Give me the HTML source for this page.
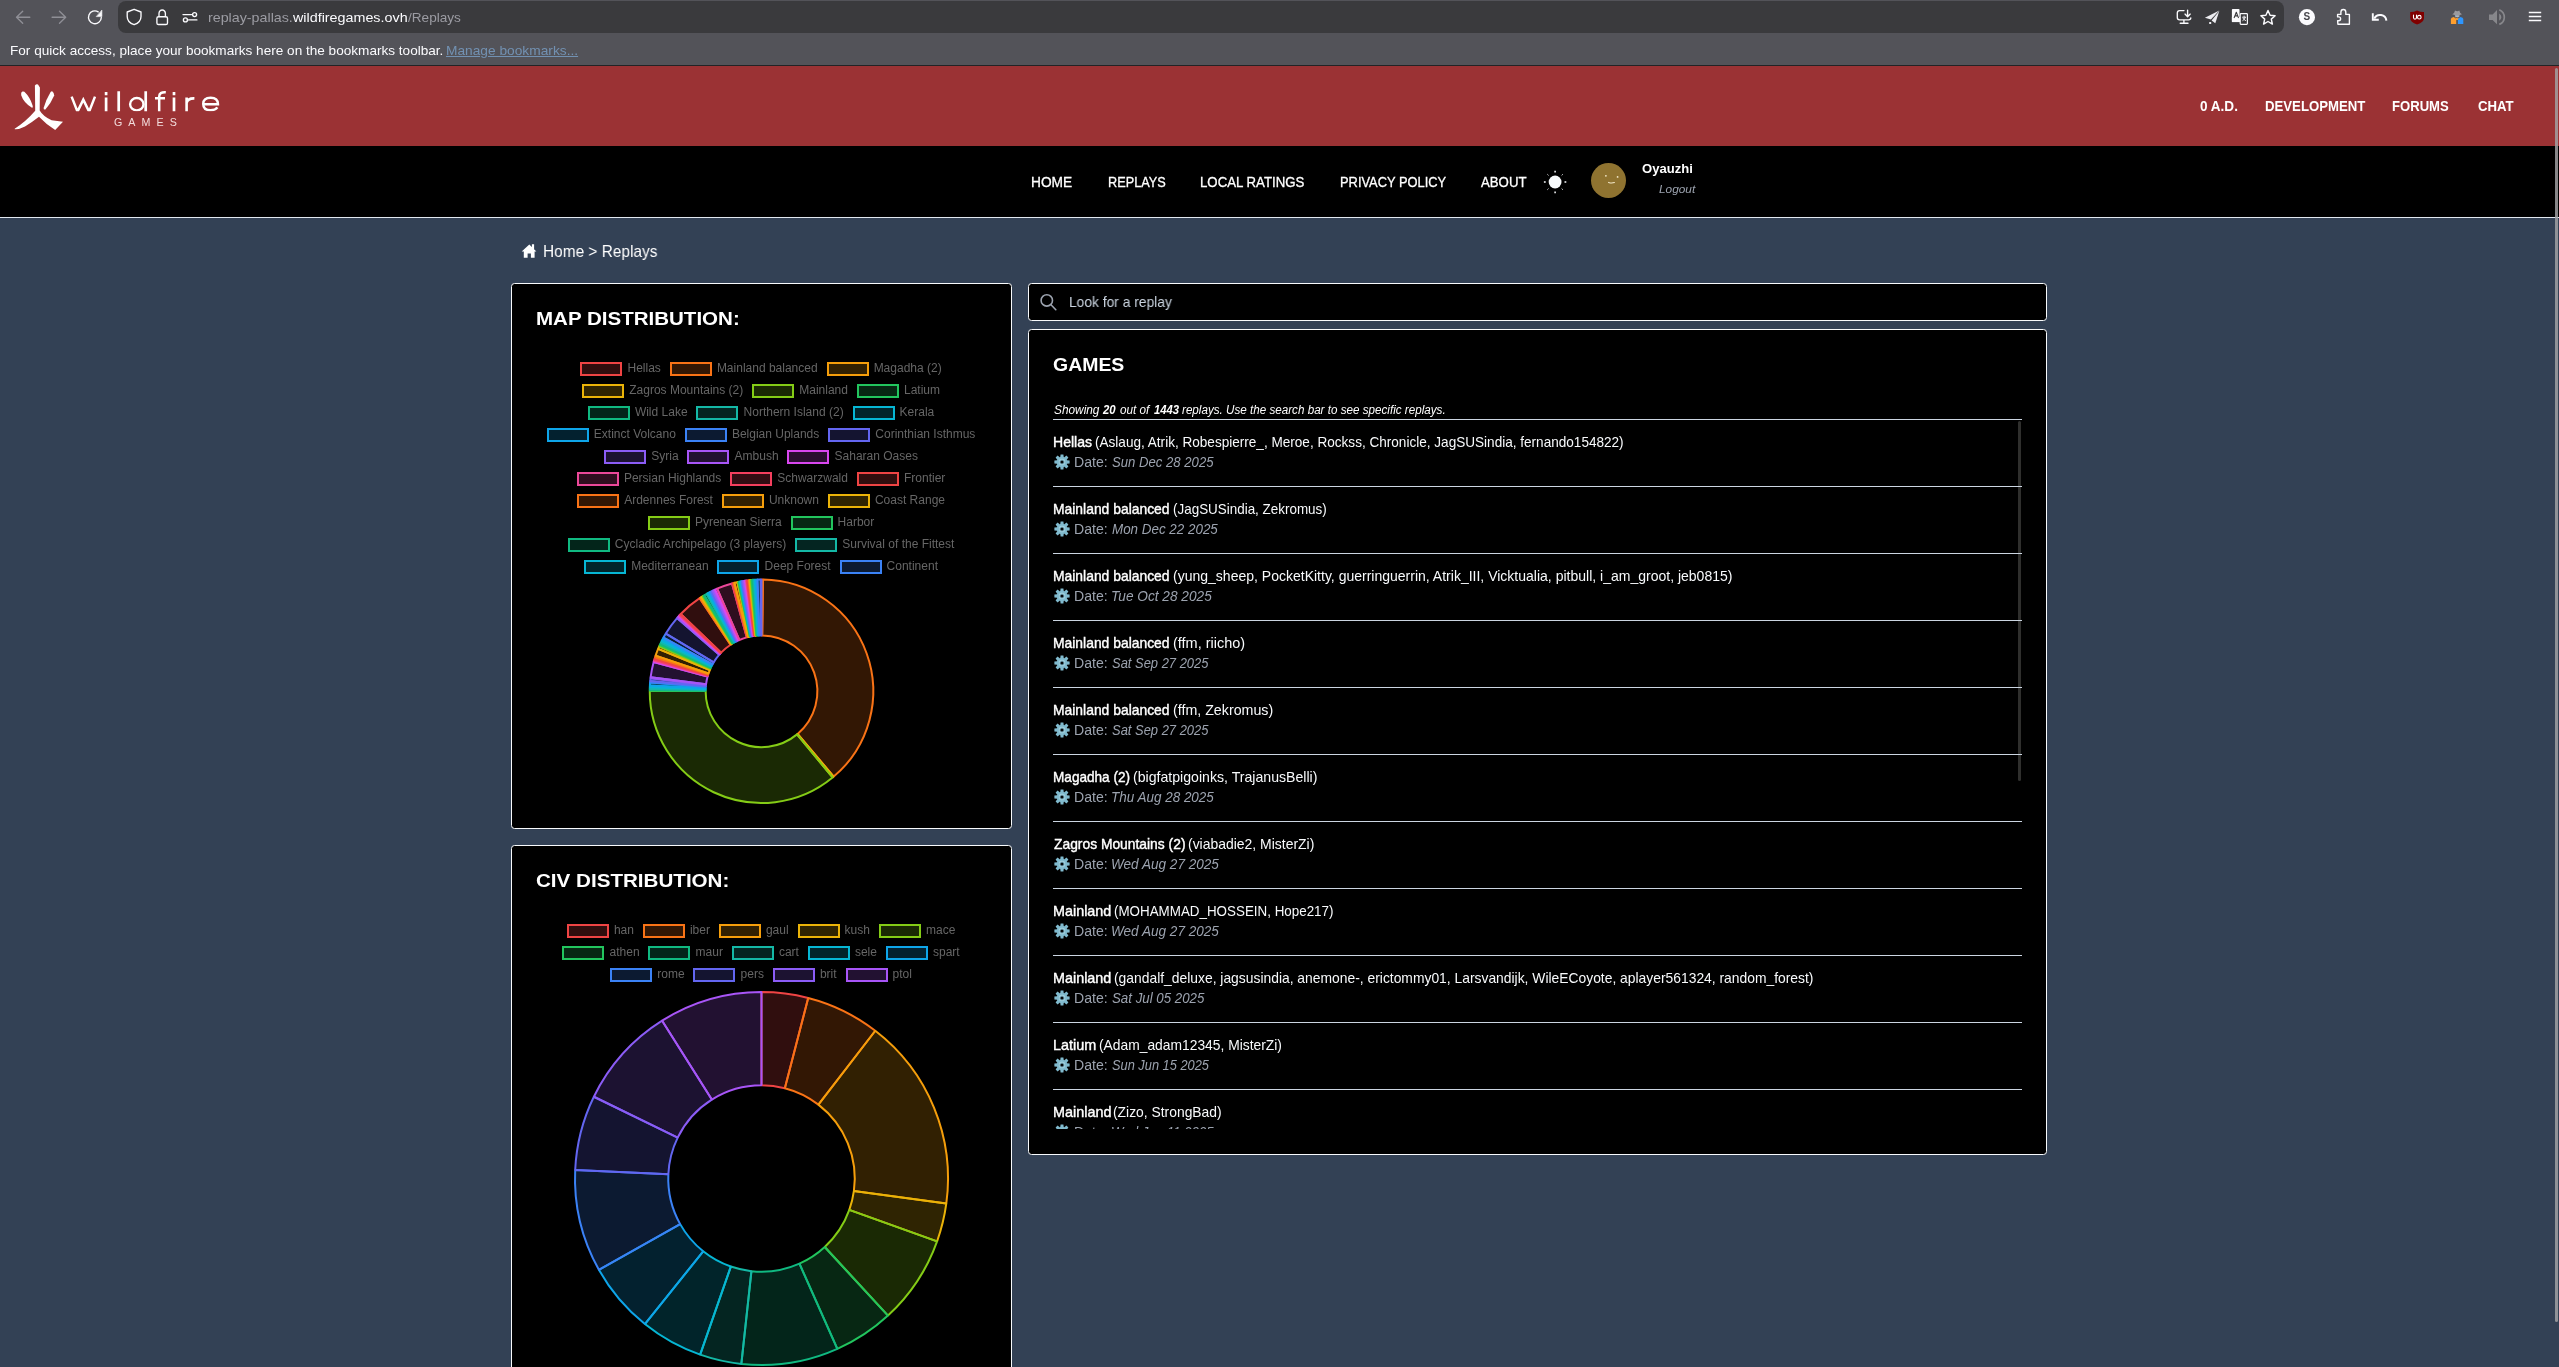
<!DOCTYPE html>
<html><head><meta charset="utf-8"><title>Replays</title>
<style>
html,body{margin:0;padding:0;background:#334155;overflow:hidden}
body{width:2559px;height:1367px;position:relative;font-family:"Liberation Sans",sans-serif}
.abs,.t,.lb,.lt,.sep,.gear,.box{position:absolute}
.t{white-space:pre;line-height:1;transform-origin:0 0;font-family:"Liberation Sans",sans-serif}
.box{background:#000;border:1px solid #f8fafc;border-radius:3.5px;box-sizing:border-box}
.lb{width:42px;height:14px;box-sizing:border-box;border:2px solid}
.lt{white-space:pre;line-height:1;font-size:12px;color:#666;font-family:"Liberation Sans",sans-serif}
.sep{left:0;width:969px;height:1px;background:#cbd5e1}
.gear{left:0.7px;width:16px;height:16px}
svg{overflow:visible}
.donut path{stroke-width:2;stroke-linejoin:bevel}
#root{position:absolute;left:0;top:0;width:2559px;height:1367px;will-change:transform}
</style></head><body><div id="root">
<svg width="0" height="0" style="position:absolute"><defs>
<g id="gear"><path fill="#80bace" d="M-1.75 -4.68L-1.40 -7.62L1.40 -7.62L1.75 -4.68L2.07 -4.55L4.40 -6.38L6.38 -4.40L4.55 -2.07L4.68 -1.75L7.62 -1.40L7.62 1.40L4.68 1.75L4.55 2.07L6.38 4.40L4.40 6.38L2.07 4.55L1.75 4.68L1.40 7.62L-1.40 7.62L-1.75 4.68L-2.07 4.55L-4.40 6.38L-6.38 4.40L-4.55 2.07L-4.68 1.75L-7.62 1.40L-7.62 -1.40L-4.68 -1.75L-4.55 -2.07L-6.38 -4.40L-4.40 -6.38L-2.07 -4.55Z"/><circle r="5.1" fill="#80bace"/><circle r="3.2" fill="#a9d6e2"/><circle r="2.6" fill="#7fb4c6"/><circle r="1.6" fill="#05080a"/></g>
</defs></svg>

<!-- browser chrome -->
<div class="abs" style="left:0;top:0;width:2559px;height:65px;background:#535359"></div>
<div class="abs" style="left:0;top:65px;width:2559px;height:1px;background:#232326"></div>
<div class="abs" style="left:118px;top:1px;width:2166px;height:32px;border-radius:8px;background:#3a3a3d"></div>

<svg class="abs" style="left:0;top:0" width="2559" height="66" viewBox="0 0 2559 66" fill="none" stroke-linecap="round" stroke-linejoin="round">
 <g stroke="#8f8f96" stroke-width="1.35">
  <path d="M29.8 17.2H16.6M22.7 11.2L16.5 17.2L22.7 23.2"/>
  <path d="M52.1 17.2H65.5M59.5 11.2L65.7 17.2L59.5 23.2"/>
 </g>
 <g stroke="#fbfbfe" stroke-width="1.35">
  <path d="M101.3 17.4A6.4 6.4 0 1 1 98.2 11.8"/>
  <path d="M101.9 10.4V16.6H96.6Z" fill="#fbfbfe" stroke-width="0.6"/>
  <path d="M134.1 9.3L141 12V16.4C141 20.4 138.4 23.2 134.1 24.7C129.8 23.2 127.2 20.4 127.2 16.4V12Z"/>
  <rect x="156.9" y="16.7" width="10.6" height="7.8" rx="1.6"/>
  <path d="M159 16.6V13.6A3.2 3.6 0 0 1 165.4 13.6V16.6"/>
  <path d="M183 14.6H191.6M188.6 19.9H196.9"/>
  <circle cx="194.6" cy="14.6" r="2"/><circle cx="185.4" cy="19.9" r="2"/>
  <!-- screen + download -->
  <path d="M2184 10.6H2179.6Q2177.3 10.6 2177.3 12.9V17.6Q2177.3 19.9 2179.6 19.9H2188.6Q2190.8 19.9 2190.8 17.8M2183.9 20.2V23M2180.2 23.2H2188"/>
  <path d="M2187.6 10.1V16.4M2185 14.1L2187.6 16.7L2190.2 14.1"/>
  <!-- star -->
  <path d="M2268.0 10.5L2270.1 15.2L2275.1 15.7L2271.3 19.1L2272.4 24.1L2268.0 21.5L2263.6 24.1L2264.7 19.1L2260.9 15.7L2265.9 15.2Z" stroke-width="1.45"/>
  <!-- puzzle -->
  <path d="M2337.9 24.3H2349.4V14.4H2345.8V12.2Q2345.8 9.5 2343.4 9.5Q2340.9 9.5 2340.9 12.2V14.4H2337.6V16.9H2338.7Q2340.6 16.9 2340.6 18.8Q2340.6 20.7 2338.7 20.7H2337.6Z" stroke-width="1.4"/>
  <!-- undo -->
  <path d="M2372.8 13.3V19.7H2378.8" stroke-width="1.9" stroke-linecap="butt" stroke-linejoin="miter"/>
  <path d="M2374.3 18.6A6.4 6.4 0 0 1 2386.4 20.6" stroke-width="2" stroke-linecap="butt"/>
  <!-- hamburger -->
  <path d="M2528.8 12.6H2541.2M2528.8 16.6H2541.2M2528.8 20.5H2541.2" stroke-width="1.5" stroke-linecap="butt"/>
 </g>
 <!-- paper plane -->
 <g fill="#ececf0" stroke="none">
  <path d="M2204.9 17.7L2219.3 10.6L2210.9 19.6Z"/>
  <path d="M2219.3 10.9L2215.3 23.3L2211.6 20.4Z"/>
  <rect x="2209.2" y="22" width="2" height="2"/>
 </g>
 <!-- translate -->
 <rect x="2231.9" y="8.9" width="7.6" height="13.2" rx="0.8" fill="#fbfbfe"/>
 <path d="M2231.9 17H2241.5V22.1H2231.9Z" fill="#fbfbfe"/>
 <path d="M2234.2 17.6L2236.3 12.2L2238.4 17.6M2235 15.9H2237.6" stroke="#3a3a3d" stroke-width="1.1"/>
 <rect x="2240.2" y="13.7" width="7.2" height="10.6" rx="0.8" fill="#3a3a3d" stroke="#fbfbfe" stroke-width="1.2"/>
 <path d="M2242.6 17.2H2245.6M2244.1 16V17.2M2242.8 20.6Q2244.9 19.6 2245.3 17.4M2243 18.2Q2244 20 2245.6 20.6" stroke="#fbfbfe" stroke-width="0.9"/>
 <!-- S -->
 <circle cx="2306.95" cy="17.15" r="8.05" fill="#fbfbfe"/>
 <!-- ublock -->
 <path d="M2417.1 10.4Q2420.6 12.2 2424 12V18Q2424 22 2417.1 24.6Q2410.2 22 2410.2 18V12Q2413.6 12.2 2417.1 10.4Z" fill="#800000"/>
 <path d="M2413.5 15V17.6Q2413.5 19.2 2415 19.2Q2416.5 19.2 2416.5 17.6V15" stroke="#fff" stroke-width="1.1"/>
 <circle cx="2419.3" cy="17.2" r="1.8" stroke="#fff" stroke-width="1.1"/>
 <!-- people -->
 <path d="M2452.3 14.3Q2454.5 13.6 2455 10.6Q2457.2 11.8 2459.3 10.6Q2459.8 13.6 2462 14.3Q2457.2 16.6 2452.3 14.3Z" fill="#9a9a9e"/>
 <path d="M2454.9 15.2H2459.5V16.6Q2457.2 18.2 2454.9 16.6Z" fill="#a9b8c8"/>
 <path d="M2455 17Q2457.2 19.5 2459.4 17L2458 20H2456.4Z" fill="#ff9f2e"/>
 <path d="M2450.9 23.9V19Q2451 17.2 2453.8 16.9L2456.2 19V23.9Z" fill="#ff9f2e"/>
 <path d="M2463.3 23.9V19Q2463.2 17.2 2460.4 16.9L2457.9 19V23.9Z" fill="#2e96ff"/>
 <!-- speaker -->
 <g fill="#87878b"><path d="M2489 14.6H2492.6L2497 10.1V24.2L2492.6 20.1H2489Z"/>
 <path d="M2499.2 13.6Q2503.6 17.3 2499.2 20.7Z"/></g>
 <path d="M2499.3 9.7Q2504.3 12 2504.3 17.2Q2504.3 22.4 2499.3 24.4" stroke="#87878b" stroke-width="1.7" stroke-linecap="butt"/>
</svg>
<span class="t" style="left:2303.6px;top:12.2px;font-size:10px;font-weight:700;color:#45454b">S</span>


<!-- site header -->
<div class="abs" style="left:0;top:66px;width:2559px;height:80px;background:#9b3234"></div>

<svg class="abs" style="left:0;top:66px" width="240" height="80" viewBox="0 66 240 80">
 <g fill="#fff">
  <path d="M34.9 85.6Q36.5 83.6 38 84.6L39.9 87.6L39.7 110.6Q43.2 116.6 51.6 120.3L63 121.8L55.2 130Q45.6 124 39 116.8Q33 121.6 25 126.5Q19 129.6 14.8 129.3Q14.4 128.8 15 128.5Q26 121.5 35.2 110.8Z"/>
  <path d="M22.4 91.6Q20.6 92.3 21.2 95.2Q23.6 102.6 32 107.8Q33.4 107.6 32.6 105.4Q30 97.2 24.4 91.8Q23.4 91.2 22.4 91.6Z"/>
  <path d="M52.2 91.2Q54.6 93.2 54.2 95.6Q51 103.4 45.4 109.4Q43.6 110.2 43.6 108Q46 99.6 50.6 92Q51.4 91 52.2 91.2Z"/>
 </g>
 <clipPath id="lc"><rect x="60" y="88" width="170" height="23.35"/></clipPath>
 <g fill="none" stroke="#fff" stroke-width="2.7" stroke-linejoin="miter" clip-path="url(#lc)">
  <path d="M71.6 96.6L77.5 111.6L83.3 99.6L89.1 111.6L95 96.6" stroke-width="2.5"/>
  <path d="M106.1 97.4V112M106.1 92.1V95.3"/>
  <path d="M118.7 91.2V112"/>
  <ellipse cx="136.8" cy="104.2" rx="6.7" ry="6.2" stroke-width="2.4"/>
  <path d="M145.7 91.2V112"/>
  <path d="M159.2 112V96.4Q159.2 91.9 165.8 92.3M155 98.3H165" stroke-width="2.5"/>
  <path d="M174 97.4V112M174 92.1V95.3"/>
  <path d="M186.6 97.4V112M186.6 103Q187.4 98.2 194.4 98.4" stroke-width="2.6"/>
  <path d="M203.4 104.3H218Q218 97.7 210.6 97.7Q203.2 97.7 203.2 104Q203.2 110.3 210.6 110.3Q215.4 110.3 217.4 107.4" stroke-width="2.4"/>
 </g>
</svg>
<div class="abs" style="left:0;top:146px;width:2559px;height:71px;background:#000"></div>
<div class="abs" style="left:0;top:217px;width:2559px;height:1px;background:#e2e8f0"></div>

<!-- nav icons -->
<svg class="abs" style="left:1540px;top:167px" width="30" height="30" viewBox="1540 167 30 30">
 <circle cx="1555.1" cy="182" r="6.4" fill="#f8fafc"/>
 <g stroke="#f8fafc" stroke-width="1.5" stroke-linecap="butt">
  <path d="M1555.1 170.8V172.6M1555.1 191.4V193.2M1543.9 182H1545.7M1564.5 182H1566.3"/>
  <path d="M1547.4 174.3L1548.5 175.4M1561.7 188.6L1562.8 189.7M1547.4 189.7L1548.5 188.6M1561.7 175.4L1562.8 174.3" stroke-width="0.9"/>
 </g>
</svg>
<div class="abs" style="left:1591px;top:163px;width:35px;height:35px;border-radius:50%;background:#8f7330"></div>
<svg class="abs" style="left:1591px;top:163px" width="35" height="35" viewBox="1591 163 35 35">
 <circle cx="1605.9" cy="175.8" r="0.9" fill="#f3e8c8"/><circle cx="1617.6" cy="176.9" r="0.9" fill="#f3e8c8"/>
 <path d="M1608.6 182.4Q1611.4 183.6 1614.4 182.6" stroke="#f3e8c8" stroke-width="1.1" fill="none" stroke-linecap="round"/>
</svg>

<!-- breadcrumb home icon -->
<svg class="abs" style="left:520px;top:243px" width="20" height="18" viewBox="520 243 20 18">
 <path fill="#fff" d="M521.7 251.6L529.3 244.5L536.4 251.6ZM523.8 250.4H534.6V257.7H530.9V253.6H527.6V257.7H523.8ZM531.9 244.3H534.1V249H531.9Z"/>
</svg>

<!-- left panels -->
<div class="box" style="left:511px;top:283px;width:501px;height:546px"></div>
<div class="box" style="left:511px;top:845px;width:501px;height:560px"></div>
<div class="abs" style="left:536px;top:352.9px;width:451px;height:451px">
<i class="lb" style="left:44.42px;top:9px;border-color:#ef4444;background:#300e0e"></i><span class="lt" style="left:91.52px;top:8.84px">Hellas</span>
<i class="lb" style="left:133.78px;top:9px;border-color:#f97316;background:#321704"></i><span class="lt" style="left:180.88px;top:8.84px">Mainland balanced</span>
<i class="lb" style="left:290.53px;top:9px;border-color:#f59e0b;background:#312002"></i><span class="lt" style="left:337.63px;top:8.84px">Magadha (2)</span>
<i class="lb" style="left:46.11px;top:31px;border-color:#eab308;background:#2f2402"></i><span class="lt" style="left:93.21px;top:30.84px">Zagros Mountains (2)</span>
<i class="lb" style="left:216.16px;top:31px;border-color:#84cc16;background:#1a2904"></i><span class="lt" style="left:263.26px;top:30.84px">Mainland</span>
<i class="lb" style="left:320.86px;top:31px;border-color:#22c55e;background:#072713"></i><span class="lt" style="left:367.96px;top:30.84px">Latium</span>
<i class="lb" style="left:51.79px;top:53px;border-color:#10b981;background:#03251a"></i><span class="lt" style="left:98.89px;top:52.84px">Wild Lake</span>
<i class="lb" style="left:160.48px;top:53px;border-color:#14b8a6;background:#042521"></i><span class="lt" style="left:207.58px;top:52.84px">Northern Island (2)</span>
<i class="lb" style="left:316.52px;top:53px;border-color:#06b6d4;background:#01242a"></i><span class="lt" style="left:363.62px;top:52.84px">Kerala</span>
<i class="lb" style="left:10.74px;top:75px;border-color:#0ea5e9;background:#03212f"></i><span class="lt" style="left:57.84px;top:74.84px">Extinct Volcano</span>
<i class="lb" style="left:148.80px;top:75px;border-color:#3b82f6;background:#0c1a31"></i><span class="lt" style="left:195.90px;top:74.84px">Belgian Uplands</span>
<i class="lb" style="left:292.21px;top:75px;border-color:#6366f1;background:#141430"></i><span class="lt" style="left:339.31px;top:74.84px">Corinthian Isthmus</span>
<i class="lb" style="left:68.12px;top:97px;border-color:#8b5cf6;background:#1c1231"></i><span class="lt" style="left:115.22px;top:96.84px">Syria</span>
<i class="lb" style="left:151.46px;top:97px;border-color:#a855f7;background:#221131"></i><span class="lt" style="left:198.56px;top:96.84px">Ambush</span>
<i class="lb" style="left:251.49px;top:97px;border-color:#d946ef;background:#2b0e30"></i><span class="lt" style="left:298.59px;top:96.84px">Saharan Oases</span>
<i class="lb" style="left:40.78px;top:119px;border-color:#ec4899;background:#2f0e1f"></i><span class="lt" style="left:87.88px;top:118.84px">Persian Highlands</span>
<i class="lb" style="left:194.17px;top:119px;border-color:#f43f5e;background:#310d13"></i><span class="lt" style="left:241.27px;top:118.84px">Schwarzwald</span>
<i class="lb" style="left:320.88px;top:119px;border-color:#ef4444;background:#300e0e"></i><span class="lt" style="left:367.98px;top:118.84px">Frontier</span>
<i class="lb" style="left:41.10px;top:141px;border-color:#f97316;background:#321704"></i><span class="lt" style="left:88.20px;top:140.84px">Ardennes Forest</span>
<i class="lb" style="left:185.82px;top:141px;border-color:#f59e0b;background:#312002"></i><span class="lt" style="left:232.92px;top:140.84px">Unknown</span>
<i class="lb" style="left:291.85px;top:141px;border-color:#eab308;background:#2f2402"></i><span class="lt" style="left:338.95px;top:140.84px">Coast Range</span>
<i class="lb" style="left:111.80px;top:163px;border-color:#84cc16;background:#1a2904"></i><span class="lt" style="left:158.90px;top:162.84px">Pyrenean Sierra</span>
<i class="lb" style="left:254.52px;top:163px;border-color:#22c55e;background:#072713"></i><span class="lt" style="left:301.62px;top:162.84px">Harbor</span>
<i class="lb" style="left:31.77px;top:185px;border-color:#10b981;background:#03251a"></i><span class="lt" style="left:78.87px;top:184.84px">Cycladic Archipelago (3 players)</span>
<i class="lb" style="left:259.19px;top:185px;border-color:#14b8a6;background:#042521"></i><span class="lt" style="left:306.29px;top:184.84px">Survival of the Fittest</span>
<i class="lb" style="left:48.10px;top:207px;border-color:#06b6d4;background:#01242a"></i><span class="lt" style="left:95.20px;top:206.84px">Mediterranean</span>
<i class="lb" style="left:181.49px;top:207px;border-color:#0ea5e9;background:#03212f"></i><span class="lt" style="left:228.59px;top:206.84px">Deep Forest</span>
<i class="lb" style="left:303.52px;top:207px;border-color:#3b82f6;background:#0c1a31"></i><span class="lt" style="left:350.62px;top:206.84px">Continent</span>
<svg class="abs donut" style="left:0;top:0" width="451" height="451" viewBox="0 0 451 451">
<path d="M225.50 226.50A111.75 111.75 0 0 1 226.96 226.51L226.23 282.38A55.875 55.875 0 0 0 225.50 282.38Z" fill="rgba(239,68,68,0.2)" stroke="#ef4444"/>
<path d="M226.96 226.51A111.75 111.75 0 0 1 297.70 423.54L261.60 380.90A55.875 55.875 0 0 0 226.23 282.38Z" fill="rgba(249,115,22,0.2)" stroke="#f97316"/>
<path d="M297.70 423.54A111.75 111.75 0 0 1 297.33 423.86L261.42 381.05A55.875 55.875 0 0 0 261.60 380.90Z" fill="rgba(245,158,11,0.2)" stroke="#f59e0b"/>
<path d="M297.33 423.86A111.75 111.75 0 0 1 296.58 424.48L261.04 381.36A55.875 55.875 0 0 0 261.42 381.05Z" fill="rgba(234,179,8,0.2)" stroke="#eab308"/>
<path d="M296.58 424.48A111.75 111.75 0 0 1 113.75 337.86L169.63 338.05A55.875 55.875 0 0 0 261.04 381.36Z" fill="rgba(132,204,22,0.2)" stroke="#84cc16"/>
<path d="M113.75 337.86A111.75 111.75 0 0 1 113.76 336.88L169.63 337.57A55.875 55.875 0 0 0 169.63 338.05Z" fill="rgba(34,197,94,0.2)" stroke="#22c55e"/>
<path d="M113.76 336.88A111.75 111.75 0 0 1 113.77 335.91L169.64 337.08A55.875 55.875 0 0 0 169.63 337.57Z" fill="rgba(16,185,129,0.2)" stroke="#10b981"/>
<path d="M113.77 335.91A111.75 111.75 0 0 1 113.82 334.35L169.66 336.30A55.875 55.875 0 0 0 169.64 337.08Z" fill="rgba(20,184,166,0.2)" stroke="#14b8a6"/>
<path d="M113.82 334.35A111.75 111.75 0 0 1 113.90 332.40L169.70 335.33A55.875 55.875 0 0 0 169.66 336.30Z" fill="rgba(6,182,212,0.2)" stroke="#06b6d4"/>
<path d="M113.90 332.40A111.75 111.75 0 0 1 114.09 329.48L169.80 333.87A55.875 55.875 0 0 0 169.70 335.33Z" fill="rgba(14,165,233,0.2)" stroke="#0ea5e9"/>
<path d="M114.09 329.48A111.75 111.75 0 0 1 114.21 328.12L169.85 333.19A55.875 55.875 0 0 0 169.80 333.87Z" fill="rgba(59,130,246,0.2)" stroke="#3b82f6"/>
<path d="M114.21 328.12A111.75 111.75 0 0 1 114.51 325.21L170.01 331.73A55.875 55.875 0 0 0 169.85 333.19Z" fill="rgba(99,102,241,0.2)" stroke="#6366f1"/>
<path d="M114.51 325.21A111.75 111.75 0 0 1 114.63 324.24L170.07 331.25A55.875 55.875 0 0 0 170.01 331.73Z" fill="rgba(139,92,246,0.2)" stroke="#8b5cf6"/>
<path d="M114.63 324.24A111.75 111.75 0 0 1 117.66 308.95L171.58 323.60A55.875 55.875 0 0 0 170.07 331.25Z" fill="rgba(168,85,247,0.2)" stroke="#a855f7"/>
<path d="M117.66 308.95A111.75 111.75 0 0 1 117.97 307.82L171.74 323.04A55.875 55.875 0 0 0 171.58 323.60Z" fill="rgba(217,70,239,0.2)" stroke="#d946ef"/>
<path d="M117.97 307.82A111.75 111.75 0 0 1 118.30 306.70L171.90 322.47A55.875 55.875 0 0 0 171.74 323.04Z" fill="rgba(236,72,153,0.2)" stroke="#ec4899"/>
<path d="M118.30 306.70A111.75 111.75 0 0 1 118.63 305.58L172.07 321.91A55.875 55.875 0 0 0 171.90 322.47Z" fill="rgba(244,63,94,0.2)" stroke="#f43f5e"/>
<path d="M118.63 305.58A111.75 111.75 0 0 1 119.04 304.27L172.27 321.26A55.875 55.875 0 0 0 172.07 321.91Z" fill="rgba(239,68,68,0.2)" stroke="#ef4444"/>
<path d="M119.04 304.27A111.75 111.75 0 0 1 119.59 302.61L172.54 320.43A55.875 55.875 0 0 0 172.27 321.26Z" fill="rgba(249,115,22,0.2)" stroke="#f97316"/>
<path d="M119.59 302.61A111.75 111.75 0 0 1 122.11 295.85L173.80 317.05A55.875 55.875 0 0 0 172.54 320.43Z" fill="rgba(245,158,11,0.2)" stroke="#f59e0b"/>
<path d="M122.11 295.85A111.75 111.75 0 0 1 123.17 293.33L174.34 315.79A55.875 55.875 0 0 0 173.80 317.05Z" fill="rgba(234,179,8,0.2)" stroke="#eab308"/>
<path d="M123.17 293.33A111.75 111.75 0 0 1 123.73 292.09L174.62 315.17A55.875 55.875 0 0 0 174.34 315.79Z" fill="rgba(132,204,22,0.2)" stroke="#84cc16"/>
<path d="M123.73 292.09A111.75 111.75 0 0 1 124.30 290.85L174.90 314.55A55.875 55.875 0 0 0 174.62 315.17Z" fill="rgba(34,197,94,0.2)" stroke="#22c55e"/>
<path d="M124.30 290.85A111.75 111.75 0 0 1 124.89 289.61L175.19 313.93A55.875 55.875 0 0 0 174.90 314.55Z" fill="rgba(16,185,129,0.2)" stroke="#10b981"/>
<path d="M124.89 289.61A111.75 111.75 0 0 1 125.58 288.21L175.54 313.23A55.875 55.875 0 0 0 175.19 313.93Z" fill="rgba(20,184,166,0.2)" stroke="#14b8a6"/>
<path d="M125.58 288.21A111.75 111.75 0 0 1 126.47 286.48L175.98 312.36A55.875 55.875 0 0 0 175.54 313.23Z" fill="rgba(6,182,212,0.2)" stroke="#06b6d4"/>
<path d="M126.47 286.48A111.75 111.75 0 0 1 127.48 284.59L176.49 311.42A55.875 55.875 0 0 0 175.98 312.36Z" fill="rgba(14,165,233,0.2)" stroke="#0ea5e9"/>
<path d="M127.48 284.59A111.75 111.75 0 0 1 129.81 280.53L177.66 309.39A55.875 55.875 0 0 0 176.49 311.42Z" fill="rgba(59,130,246,0.2)" stroke="#3b82f6"/>
<path d="M129.81 280.53A111.75 111.75 0 0 1 141.03 265.08L183.27 301.67A55.875 55.875 0 0 0 177.66 309.39Z" fill="rgba(99,102,241,0.2)" stroke="#6366f1"/>
<path d="M141.03 265.08A111.75 111.75 0 0 1 141.80 264.20L183.65 301.23A55.875 55.875 0 0 0 183.27 301.67Z" fill="rgba(139,92,246,0.2)" stroke="#8b5cf6"/>
<path d="M141.80 264.20A111.75 111.75 0 0 1 142.58 263.33L184.04 300.79A55.875 55.875 0 0 0 183.65 301.23Z" fill="rgba(168,85,247,0.2)" stroke="#a855f7"/>
<path d="M142.58 263.33A111.75 111.75 0 0 1 143.37 262.47L184.44 300.36A55.875 55.875 0 0 0 184.04 300.79Z" fill="rgba(217,70,239,0.2)" stroke="#d946ef"/>
<path d="M143.37 262.47A111.75 111.75 0 0 1 144.04 261.75L184.77 300.00A55.875 55.875 0 0 0 184.44 300.36Z" fill="rgba(236,72,153,0.2)" stroke="#ec4899"/>
<path d="M144.04 261.75A111.75 111.75 0 0 1 144.71 261.04L185.10 299.65A55.875 55.875 0 0 0 184.77 300.00Z" fill="rgba(244,63,94,0.2)" stroke="#f43f5e"/>
<path d="M144.71 261.04A111.75 111.75 0 0 1 163.66 245.17L194.58 291.71A55.875 55.875 0 0 0 185.10 299.65Z" fill="rgba(239,68,68,0.2)" stroke="#ef4444"/>
<path d="M163.66 245.17A111.75 111.75 0 0 1 164.64 244.53L195.07 291.39A55.875 55.875 0 0 0 194.58 291.71Z" fill="rgba(249,115,22,0.2)" stroke="#f97316"/>
<path d="M164.64 244.53A111.75 111.75 0 0 1 165.62 243.90L195.56 291.07A55.875 55.875 0 0 0 195.07 291.39Z" fill="rgba(245,158,11,0.2)" stroke="#f59e0b"/>
<path d="M165.62 243.90A111.75 111.75 0 0 1 166.61 243.27L196.06 290.76A55.875 55.875 0 0 0 195.56 291.07Z" fill="rgba(234,179,8,0.2)" stroke="#eab308"/>
<path d="M166.61 243.27A111.75 111.75 0 0 1 167.44 242.76L196.47 290.51A55.875 55.875 0 0 0 196.06 290.76Z" fill="rgba(132,204,22,0.2)" stroke="#84cc16"/>
<path d="M167.44 242.76A111.75 111.75 0 0 1 168.28 242.26L196.89 290.26A55.875 55.875 0 0 0 196.47 290.51Z" fill="rgba(34,197,94,0.2)" stroke="#22c55e"/>
<path d="M168.28 242.26A111.75 111.75 0 0 1 170.64 240.89L198.07 289.57A55.875 55.875 0 0 0 196.89 290.26Z" fill="rgba(16,185,129,0.2)" stroke="#10b981"/>
<path d="M170.64 240.89A111.75 111.75 0 0 1 171.84 240.23L198.67 289.24A55.875 55.875 0 0 0 198.07 289.57Z" fill="rgba(20,184,166,0.2)" stroke="#14b8a6"/>
<path d="M171.84 240.23A111.75 111.75 0 0 1 173.04 239.58L199.27 288.92A55.875 55.875 0 0 0 198.67 289.24Z" fill="rgba(6,182,212,0.2)" stroke="#06b6d4"/>
<path d="M173.04 239.58A111.75 111.75 0 0 1 174.25 238.95L199.87 288.60A55.875 55.875 0 0 0 199.27 288.92Z" fill="rgba(14,165,233,0.2)" stroke="#0ea5e9"/>
<path d="M174.25 238.95A111.75 111.75 0 0 1 175.46 238.33L200.48 288.29A55.875 55.875 0 0 0 199.87 288.60Z" fill="rgba(59,130,246,0.2)" stroke="#3b82f6"/>
<path d="M175.46 238.33A111.75 111.75 0 0 1 176.69 237.72L201.09 287.99A55.875 55.875 0 0 0 200.48 288.29Z" fill="rgba(99,102,241,0.2)" stroke="#6366f1"/>
<path d="M176.69 237.72A111.75 111.75 0 0 1 177.92 237.14L201.71 287.69A55.875 55.875 0 0 0 201.09 287.99Z" fill="rgba(139,92,246,0.2)" stroke="#8b5cf6"/>
<path d="M177.92 237.14A111.75 111.75 0 0 1 178.98 236.64L202.24 287.45A55.875 55.875 0 0 0 201.71 287.69Z" fill="rgba(168,85,247,0.2)" stroke="#a855f7"/>
<path d="M178.98 236.64A111.75 111.75 0 0 1 181.12 235.69L203.31 286.97A55.875 55.875 0 0 0 202.24 287.45Z" fill="rgba(217,70,239,0.2)" stroke="#d946ef"/>
<path d="M181.12 235.69A111.75 111.75 0 0 1 196.01 230.46L210.76 284.36A55.875 55.875 0 0 0 203.31 286.97Z" fill="rgba(236,72,153,0.2)" stroke="#ec4899"/>
<path d="M196.01 230.46A111.75 111.75 0 0 1 196.77 230.26L211.13 284.25A55.875 55.875 0 0 0 210.76 284.36Z" fill="rgba(244,63,94,0.2)" stroke="#f43f5e"/>
<path d="M196.77 230.26A111.75 111.75 0 0 1 197.52 230.06L211.51 284.15A55.875 55.875 0 0 0 211.13 284.25Z" fill="rgba(239,68,68,0.2)" stroke="#ef4444"/>
<path d="M197.52 230.06A111.75 111.75 0 0 1 198.47 229.82L211.98 284.03A55.875 55.875 0 0 0 211.51 284.15Z" fill="rgba(249,115,22,0.2)" stroke="#f97316"/>
<path d="M198.47 229.82A111.75 111.75 0 0 1 201.31 229.15L213.41 283.70A55.875 55.875 0 0 0 211.98 284.03Z" fill="rgba(245,158,11,0.2)" stroke="#f59e0b"/>
<path d="M201.31 229.15A111.75 111.75 0 0 1 201.88 229.02L213.69 283.64A55.875 55.875 0 0 0 213.41 283.70Z" fill="rgba(234,179,8,0.2)" stroke="#eab308"/>
<path d="M201.88 229.02A111.75 111.75 0 0 1 202.46 228.90L213.98 283.58A55.875 55.875 0 0 0 213.69 283.64Z" fill="rgba(132,204,22,0.2)" stroke="#84cc16"/>
<path d="M202.46 228.90A111.75 111.75 0 0 1 203.03 228.78L214.26 283.52A55.875 55.875 0 0 0 213.98 283.58Z" fill="rgba(34,197,94,0.2)" stroke="#22c55e"/>
<path d="M203.03 228.78A111.75 111.75 0 0 1 203.60 228.67L214.55 283.46A55.875 55.875 0 0 0 214.26 283.52Z" fill="rgba(16,185,129,0.2)" stroke="#10b981"/>
<path d="M203.60 228.67A111.75 111.75 0 0 1 204.18 228.55L214.84 283.40A55.875 55.875 0 0 0 214.55 283.46Z" fill="rgba(20,184,166,0.2)" stroke="#14b8a6"/>
<path d="M204.18 228.55A111.75 111.75 0 0 1 204.75 228.44L215.13 283.35A55.875 55.875 0 0 0 214.84 283.40Z" fill="rgba(6,182,212,0.2)" stroke="#06b6d4"/>
<path d="M204.75 228.44A111.75 111.75 0 0 1 205.33 228.34L215.41 283.29A55.875 55.875 0 0 0 215.13 283.35Z" fill="rgba(14,165,233,0.2)" stroke="#0ea5e9"/>
<path d="M205.33 228.34A111.75 111.75 0 0 1 206.09 228.20L215.80 283.22A55.875 55.875 0 0 0 215.41 283.29Z" fill="rgba(59,130,246,0.2)" stroke="#3b82f6"/>
<path d="M206.09 228.20A111.75 111.75 0 0 1 207.06 228.03L216.28 283.14A55.875 55.875 0 0 0 215.80 283.22Z" fill="rgba(99,102,241,0.2)" stroke="#6366f1"/>
<path d="M207.06 228.03A111.75 111.75 0 0 1 208.02 227.88L216.76 283.06A55.875 55.875 0 0 0 216.28 283.14Z" fill="rgba(139,92,246,0.2)" stroke="#8b5cf6"/>
<path d="M208.02 227.88A111.75 111.75 0 0 1 208.98 227.73L217.24 282.99A55.875 55.875 0 0 0 216.76 283.06Z" fill="rgba(168,85,247,0.2)" stroke="#a855f7"/>
<path d="M208.98 227.73A111.75 111.75 0 0 1 209.95 227.59L217.72 282.92A55.875 55.875 0 0 0 217.24 282.99Z" fill="rgba(217,70,239,0.2)" stroke="#d946ef"/>
<path d="M209.95 227.59A111.75 111.75 0 0 1 210.72 227.48L218.11 282.87A55.875 55.875 0 0 0 217.72 282.92Z" fill="rgba(236,72,153,0.2)" stroke="#ec4899"/>
<path d="M210.72 227.48A111.75 111.75 0 0 1 211.49 227.38L218.50 282.82A55.875 55.875 0 0 0 218.11 282.87Z" fill="rgba(244,63,94,0.2)" stroke="#f43f5e"/>
<path d="M211.49 227.38A111.75 111.75 0 0 1 212.66 227.24L219.08 282.75A55.875 55.875 0 0 0 218.50 282.82Z" fill="rgba(239,68,68,0.2)" stroke="#ef4444"/>
<path d="M212.66 227.24A111.75 111.75 0 0 1 213.43 227.15L219.47 282.70A55.875 55.875 0 0 0 219.08 282.75Z" fill="rgba(249,115,22,0.2)" stroke="#f97316"/>
<path d="M213.43 227.15A111.75 111.75 0 0 1 214.01 227.09L219.76 282.67A55.875 55.875 0 0 0 219.47 282.70Z" fill="rgba(245,158,11,0.2)" stroke="#f59e0b"/>
<path d="M214.01 227.09A111.75 111.75 0 0 1 214.60 227.03L220.05 282.64A55.875 55.875 0 0 0 219.76 282.67Z" fill="rgba(234,179,8,0.2)" stroke="#eab308"/>
<path d="M214.60 227.03A111.75 111.75 0 0 1 215.57 226.94L220.53 282.60A55.875 55.875 0 0 0 220.05 282.64Z" fill="rgba(132,204,22,0.2)" stroke="#84cc16"/>
<path d="M215.57 226.94A111.75 111.75 0 0 1 216.73 226.84L221.12 282.55A55.875 55.875 0 0 0 220.53 282.60Z" fill="rgba(34,197,94,0.2)" stroke="#22c55e"/>
<path d="M216.73 226.84A111.75 111.75 0 0 1 217.70 226.77L221.60 282.51A55.875 55.875 0 0 0 221.12 282.55Z" fill="rgba(16,185,129,0.2)" stroke="#10b981"/>
<path d="M217.70 226.77A111.75 111.75 0 0 1 218.68 226.71L222.09 282.48A55.875 55.875 0 0 0 221.60 282.51Z" fill="rgba(20,184,166,0.2)" stroke="#14b8a6"/>
<path d="M218.68 226.71A111.75 111.75 0 0 1 219.65 226.65L222.58 282.45A55.875 55.875 0 0 0 222.09 282.48Z" fill="rgba(6,182,212,0.2)" stroke="#06b6d4"/>
<path d="M219.65 226.65A111.75 111.75 0 0 1 221.41 226.58L223.45 282.41A55.875 55.875 0 0 0 222.58 282.45Z" fill="rgba(14,165,233,0.2)" stroke="#0ea5e9"/>
<path d="M221.41 226.58A111.75 111.75 0 0 1 224.72 226.50L225.11 282.38A55.875 55.875 0 0 0 223.45 282.41Z" fill="rgba(59,130,246,0.2)" stroke="#3b82f6"/>
<path d="M224.72 226.50A111.75 111.75 0 0 1 225.50 226.50L225.50 282.38A55.875 55.875 0 0 0 225.11 282.38Z" fill="rgba(99,102,241,0.2)" stroke="#6366f1"/>
</svg>
</div>
<div class="abs" style="left:536px;top:914.9px;width:451px;height:451px">
<i class="lb" style="left:30.78px;top:9px;border-color:#ef4444;background:#300e0e"></i><span class="lt" style="left:77.88px;top:8.84px">han</span>
<i class="lb" style="left:106.81px;top:9px;border-color:#f97316;background:#321704"></i><span class="lt" style="left:153.91px;top:8.84px">iber</span>
<i class="lb" style="left:182.83px;top:9px;border-color:#f59e0b;background:#312002"></i><span class="lt" style="left:229.93px;top:8.84px">gaul</span>
<i class="lb" style="left:261.52px;top:9px;border-color:#eab308;background:#2f2402"></i><span class="lt" style="left:308.62px;top:8.84px">kush</span>
<i class="lb" style="left:342.88px;top:9px;border-color:#84cc16;background:#1a2904"></i><span class="lt" style="left:389.98px;top:8.84px">mace</span>
<i class="lb" style="left:26.45px;top:31px;border-color:#22c55e;background:#072713"></i><span class="lt" style="left:73.55px;top:30.84px">athen</span>
<i class="lb" style="left:112.48px;top:31px;border-color:#10b981;background:#03251a"></i><span class="lt" style="left:159.58px;top:30.84px">maur</span>
<i class="lb" style="left:195.83px;top:31px;border-color:#14b8a6;background:#042521"></i><span class="lt" style="left:242.93px;top:30.84px">cart</span>
<i class="lb" style="left:271.84px;top:31px;border-color:#06b6d4;background:#01242a"></i><span class="lt" style="left:318.94px;top:30.84px">sele</span>
<i class="lb" style="left:349.86px;top:31px;border-color:#0ea5e9;background:#03212f"></i><span class="lt" style="left:396.96px;top:30.84px">spart</span>
<i class="lb" style="left:74.14px;top:53px;border-color:#3b82f6;background:#0c1a31"></i><span class="lt" style="left:121.24px;top:52.84px">rome</span>
<i class="lb" style="left:157.48px;top:53px;border-color:#6366f1;background:#141430"></i><span class="lt" style="left:204.58px;top:52.84px">pers</span>
<i class="lb" style="left:236.83px;top:53px;border-color:#8b5cf6;background:#1c1231"></i><span class="lt" style="left:283.93px;top:52.84px">brit</span>
<i class="lb" style="left:309.50px;top:53px;border-color:#a855f7;background:#221131"></i><span class="lt" style="left:356.60px;top:52.84px">ptol</span>
<svg class="abs donut" style="left:0;top:0" width="451" height="451" viewBox="0 0 451 451">
<path d="M225.50 77.00A186.5 186.5 0 0 1 272.20 82.94L248.85 173.22A93.25 93.25 0 0 0 225.50 170.25Z" fill="rgba(239,68,68,0.2)" stroke="#ef4444"/>
<path d="M272.20 82.94A186.5 186.5 0 0 1 339.29 115.74L282.40 189.62A93.25 93.25 0 0 0 248.85 173.22Z" fill="rgba(249,115,22,0.2)" stroke="#f97316"/>
<path d="M339.29 115.74A186.5 186.5 0 0 1 410.32 288.49L317.91 275.99A93.25 93.25 0 0 0 282.40 189.62Z" fill="rgba(245,158,11,0.2)" stroke="#f59e0b"/>
<path d="M410.32 288.49A186.5 186.5 0 0 1 401.08 326.37L313.29 294.93A93.25 93.25 0 0 0 317.91 275.99Z" fill="rgba(234,179,8,0.2)" stroke="#eab308"/>
<path d="M401.08 326.37A186.5 186.5 0 0 1 351.98 400.56L288.74 332.03A93.25 93.25 0 0 0 313.29 294.93Z" fill="rgba(132,204,22,0.2)" stroke="#84cc16"/>
<path d="M351.98 400.56A186.5 186.5 0 0 1 301.36 433.88L263.43 348.69A93.25 93.25 0 0 0 288.74 332.03Z" fill="rgba(34,197,94,0.2)" stroke="#22c55e"/>
<path d="M301.36 433.88A186.5 186.5 0 0 1 205.36 448.91L215.43 356.20A93.25 93.25 0 0 0 263.43 348.69Z" fill="rgba(16,185,129,0.2)" stroke="#10b981"/>
<path d="M205.36 448.91A186.5 186.5 0 0 1 164.17 439.63L194.83 351.56A93.25 93.25 0 0 0 215.43 356.20Z" fill="rgba(20,184,166,0.2)" stroke="#14b8a6"/>
<path d="M164.17 439.63A186.5 186.5 0 0 1 108.89 409.05L167.20 336.28A93.25 93.25 0 0 0 194.83 351.56Z" fill="rgba(6,182,212,0.2)" stroke="#06b6d4"/>
<path d="M108.89 409.05A186.5 186.5 0 0 1 62.86 354.77L144.18 309.13A93.25 93.25 0 0 0 167.20 336.28Z" fill="rgba(14,165,233,0.2)" stroke="#0ea5e9"/>
<path d="M62.86 354.77A186.5 186.5 0 0 1 39.19 255.04L132.35 259.27A93.25 93.25 0 0 0 144.18 309.13Z" fill="rgba(59,130,246,0.2)" stroke="#3b82f6"/>
<path d="M39.19 255.04A186.5 186.5 0 0 1 57.87 181.74L141.69 222.62A93.25 93.25 0 0 0 132.35 259.27Z" fill="rgba(99,102,241,0.2)" stroke="#6366f1"/>
<path d="M57.87 181.74A186.5 186.5 0 0 1 126.12 105.68L175.81 184.59A93.25 93.25 0 0 0 141.69 222.62Z" fill="rgba(139,92,246,0.2)" stroke="#8b5cf6"/>
<path d="M126.12 105.68A186.5 186.5 0 0 1 225.50 77.00L225.50 170.25A93.25 93.25 0 0 0 175.81 184.59Z" fill="rgba(168,85,247,0.2)" stroke="#a855f7"/>
</svg>
</div>

<!-- right column -->
<div class="box" style="left:1028px;top:283px;width:1019px;height:38px"></div>
<svg class="abs" style="left:1038px;top:292px" width="22" height="22" viewBox="1038 292 22 22">
 <circle cx="1046.8" cy="300.4" r="5.7" fill="none" stroke="#9ca3af" stroke-width="1.6"/>
 <path d="M1051 304.7L1055.8 309.7" stroke="#9ca3af" stroke-width="1.6" stroke-linecap="round"/>
</svg>
<div class="box" style="left:1028px;top:329px;width:1019px;height:826px"></div>
<div class="abs" style="left:1053px;top:419px;width:969px;height:1px;background:#cbd5e1"></div>
<div class="abs" style="left:1053px;top:420px;width:969px;height:709px;overflow:hidden">
 <div class="abs" style="left:-1053px;top:-420px;width:2559px;height:1367px">
<span class="t" style="left:1052.95px;top:435px;font-size:14.8px;color:#fff;transform:scaleX(0.9500);-webkit-text-stroke:0.4px #fff;">Hellas</span>
<span class="t" style="left:1095.38px;top:435px;font-size:14.8px;color:#f8fafc;transform:scaleX(0.9169);">(Aslaug, Atrik, Robespierre_, Meroe, Rockss, Chronicle, JagSUSindia, fernando154822)</span>
<span class="t" style="left:1073.98px;top:456px;font-size:13.8px;color:#9ca3af;transform:scaleX(1.0226);">Date:</span>
<span class="t" style="left:1111.60px;top:456px;font-size:13.8px;font-style:italic;color:#9ca3af;transform:scaleX(0.9523);">Sun Dec 28 2025</span>
<span class="t" style="left:1052.96px;top:502px;font-size:14.8px;color:#fff;transform:scaleX(0.9382);-webkit-text-stroke:0.4px #fff;">Mainland balanced</span>
<span class="t" style="left:1172.99px;top:502px;font-size:14.8px;color:#f8fafc;transform:scaleX(0.9077);">(JagSUSindia, Zekromus)</span>
<span class="t" style="left:1073.98px;top:523px;font-size:13.8px;color:#9ca3af;transform:scaleX(1.0226);">Date:</span>
<span class="t" style="left:1111.60px;top:523px;font-size:13.8px;font-style:italic;color:#9ca3af;transform:scaleX(0.9716);">Mon Dec 22 2025</span>
<span class="t" style="left:1052.96px;top:569px;font-size:14.8px;color:#fff;transform:scaleX(0.9382);-webkit-text-stroke:0.4px #fff;">Mainland balanced</span>
<span class="t" style="left:1172.95px;top:569px;font-size:14.8px;color:#f8fafc;transform:scaleX(0.9469);">(yung_sheep, PocketKitty, guerringuerrin, Atrik_III, Vicktualia, pitbull, i_am_groot, jeb0815)</span>
<span class="t" style="left:1073.98px;top:590px;font-size:13.8px;color:#9ca3af;transform:scaleX(1.0226);">Date:</span>
<span class="t" style="left:1110.61px;top:590px;font-size:13.8px;font-style:italic;color:#9ca3af;transform:scaleX(0.9901);">Tue Oct 28 2025</span>
<span class="t" style="left:1052.96px;top:636px;font-size:14.8px;color:#fff;transform:scaleX(0.9382);-webkit-text-stroke:0.4px #fff;">Mainland balanced</span>
<span class="t" style="left:1172.92px;top:636px;font-size:14.8px;color:#f8fafc;transform:scaleX(0.9792);">(ffm, riicho)</span>
<span class="t" style="left:1073.98px;top:657px;font-size:13.8px;color:#9ca3af;transform:scaleX(1.0226);">Date:</span>
<span class="t" style="left:1111.60px;top:657px;font-size:13.8px;font-style:italic;color:#9ca3af;transform:scaleX(0.9379);">Sat Sep 27 2025</span>
<span class="t" style="left:1052.96px;top:703px;font-size:14.8px;color:#fff;transform:scaleX(0.9382);-webkit-text-stroke:0.4px #fff;">Mainland balanced</span>
<span class="t" style="left:1172.94px;top:703px;font-size:14.8px;color:#f8fafc;transform:scaleX(0.9621);">(ffm, Zekromus)</span>
<span class="t" style="left:1073.98px;top:724px;font-size:13.8px;color:#9ca3af;transform:scaleX(1.0226);">Date:</span>
<span class="t" style="left:1111.60px;top:724px;font-size:13.8px;font-style:italic;color:#9ca3af;transform:scaleX(0.9379);">Sat Sep 27 2025</span>
<span class="t" style="left:1052.98px;top:770px;font-size:14.8px;color:#fff;transform:scaleX(0.9183);-webkit-text-stroke:0.4px #fff;">Magadha (2)</span>
<span class="t" style="left:1132.65px;top:770px;font-size:14.8px;color:#f8fafc;transform:scaleX(0.9542);">(bigfatpigoinks, TrajanusBelli)</span>
<span class="t" style="left:1073.98px;top:791px;font-size:13.8px;color:#9ca3af;transform:scaleX(1.0226);">Date:</span>
<span class="t" style="left:1110.62px;top:791px;font-size:13.8px;font-style:italic;color:#9ca3af;transform:scaleX(0.9762);">Thu Aug 28 2025</span>
<span class="t" style="left:1053.90px;top:837px;font-size:14.8px;color:#fff;transform:scaleX(0.9350);-webkit-text-stroke:0.4px #fff;">Zagros Mountains (2)</span>
<span class="t" style="left:1187.96px;top:837px;font-size:14.8px;color:#f8fafc;transform:scaleX(0.9424);">(viabadie2, MisterZi)</span>
<span class="t" style="left:1073.98px;top:858px;font-size:13.8px;color:#9ca3af;transform:scaleX(1.0226);">Date:</span>
<span class="t" style="left:1110.62px;top:858px;font-size:13.8px;font-style:italic;color:#9ca3af;transform:scaleX(0.9835);">Wed Aug 27 2025</span>
<span class="t" style="left:1052.93px;top:904px;font-size:14.8px;color:#fff;transform:scaleX(0.9707);-webkit-text-stroke:0.4px #fff;">Mainland</span>
<span class="t" style="left:1113.70px;top:904px;font-size:14.8px;color:#f8fafc;transform:scaleX(0.9046);">(MOHAMMAD_HOSSEIN, Hope217)</span>
<span class="t" style="left:1073.98px;top:925px;font-size:13.8px;color:#9ca3af;transform:scaleX(1.0226);">Date:</span>
<span class="t" style="left:1110.62px;top:925px;font-size:13.8px;font-style:italic;color:#9ca3af;transform:scaleX(0.9835);">Wed Aug 27 2025</span>
<span class="t" style="left:1052.93px;top:971px;font-size:14.8px;color:#fff;transform:scaleX(0.9707);-webkit-text-stroke:0.4px #fff;">Mainland</span>
<span class="t" style="left:1113.66px;top:971px;font-size:14.8px;color:#f8fafc;transform:scaleX(0.9366);">(gandalf_deluxe, jagsusindia, anemone-, erictommy01, Larsvandijk, WileECoyote, aplayer561324, random_forest)</span>
<span class="t" style="left:1073.98px;top:992px;font-size:13.8px;color:#9ca3af;transform:scaleX(1.0226);">Date:</span>
<span class="t" style="left:1111.60px;top:992px;font-size:13.8px;font-style:italic;color:#9ca3af;transform:scaleX(0.9635);">Sat Jul 05 2025</span>
<span class="t" style="left:1052.93px;top:1038px;font-size:14.8px;color:#fff;transform:scaleX(0.9744);-webkit-text-stroke:0.4px #fff;">Latium</span>
<span class="t" style="left:1099.17px;top:1038px;font-size:14.8px;color:#f8fafc;transform:scaleX(0.9345);">(Adam_adam12345, MisterZi)</span>
<span class="t" style="left:1073.98px;top:1059px;font-size:13.8px;color:#9ca3af;transform:scaleX(1.0226);">Date:</span>
<span class="t" style="left:1111.60px;top:1059px;font-size:13.8px;font-style:italic;color:#9ca3af;transform:scaleX(0.9286);">Sun Jun 15 2025</span>
<span class="t" style="left:1052.93px;top:1105px;font-size:14.8px;color:#fff;transform:scaleX(0.9724);-webkit-text-stroke:0.4px #fff;">Mainland</span>
<span class="t" style="left:1113.46px;top:1105px;font-size:14.8px;color:#f8fafc;transform:scaleX(0.9368);">(Zizo, StrongBad)</span>
<span class="t" style="left:1073.98px;top:1126px;font-size:13.8px;color:#9ca3af;transform:scaleX(1.0226);">Date:</span>
<span class="t" style="left:1110.64px;top:1126px;font-size:13.8px;font-style:italic;color:#9ca3af;transform:scaleX(0.9604);">Wed Jun 11 2025</span>
 </div>
 <div class="abs" style="left:965px;top:1px;width:3px;height:360px;border-radius:2px;background:#2f2f2d"></div>
<i class="sep" style="top:66px"></i><i class="sep" style="top:133px"></i><i class="sep" style="top:200px"></i><i class="sep" style="top:267px"></i><i class="sep" style="top:334px"></i><i class="sep" style="top:401px"></i><i class="sep" style="top:468px"></i><i class="sep" style="top:535px"></i><i class="sep" style="top:602px"></i><i class="sep" style="top:669px"></i><i class="sep" style="top:736px"></i>
<svg class="gear" style="top:34.2px" viewBox="-8 -8 16 16"><use href="#gear"/></svg><svg class="gear" style="top:101.2px" viewBox="-8 -8 16 16"><use href="#gear"/></svg><svg class="gear" style="top:168.2px" viewBox="-8 -8 16 16"><use href="#gear"/></svg><svg class="gear" style="top:235.2px" viewBox="-8 -8 16 16"><use href="#gear"/></svg><svg class="gear" style="top:302.2px" viewBox="-8 -8 16 16"><use href="#gear"/></svg><svg class="gear" style="top:369.2px" viewBox="-8 -8 16 16"><use href="#gear"/></svg><svg class="gear" style="top:436.2px" viewBox="-8 -8 16 16"><use href="#gear"/></svg><svg class="gear" style="top:503.2px" viewBox="-8 -8 16 16"><use href="#gear"/></svg><svg class="gear" style="top:570.2px" viewBox="-8 -8 16 16"><use href="#gear"/></svg><svg class="gear" style="top:637.2px" viewBox="-8 -8 16 16"><use href="#gear"/></svg><svg class="gear" style="top:704.2px" viewBox="-8 -8 16 16"><use href="#gear"/></svg>
</div>

<span class="t" style="left:208.22px;top:11px;font-size:13.2px;color:#9c9ca3;transform:scaleX(1.0816);">replay-pallas.</span>
<span class="t" style="left:293.20px;top:11px;font-size:13.2px;color:#fbfbfe;transform:scaleX(1.0857);">wildfiregames.ovh</span>
<span class="t" style="left:408.20px;top:11px;font-size:13.2px;color:#9c9ca3;transform:scaleX(1.0314);">/Replays</span>
<span class="t" style="left:10.45px;top:45px;font-size:12.9px;color:#fbfbfe;transform:scaleX(1.0538);">For quick access, place your bookmarks here on the bookmarks toolbar.</span>
<span class="t" style="left:445.73px;top:45px;font-size:12.9px;color:#7291b2;transform:scaleX(1.0656);text-decoration:underline;">Manage bookmarks...</span>
<span class="t" style="left:2199.90px;top:99px;font-size:14.5px;font-weight:700;color:#fff;transform:scaleX(0.9350);">0 A.D.</span>
<span class="t" style="left:2264.99px;top:99px;font-size:14.5px;font-weight:700;color:#fff;transform:scaleX(0.9092);">DEVELOPMENT</span>
<span class="t" style="left:2392.30px;top:99px;font-size:14.5px;font-weight:700;color:#fff;transform:scaleX(0.9032);">FORUMS</span>
<span class="t" style="left:2477.60px;top:99px;font-size:14.5px;font-weight:700;color:#fff;transform:scaleX(0.9103);">CHAT</span>
<span class="t" style="left:113.90px;top:117px;font-size:10.6px;color:#f3dede;transform:scaleX(1.0081);letter-spacing:6px;">GAMES</span>
<span class="t" style="left:1030.72px;top:175px;font-size:14.0px;color:#fff;transform:scaleX(0.9805);-webkit-text-stroke:0.3px #fff;">HOME</span>
<span class="t" style="left:1107.89px;top:175px;font-size:14.0px;color:#fff;transform:scaleX(0.9081);-webkit-text-stroke:0.3px #fff;">REPLAYS</span>
<span class="t" style="left:1200.36px;top:175px;font-size:14.0px;color:#fff;transform:scaleX(0.9440);-webkit-text-stroke:0.3px #fff;">LOCAL RATINGS</span>
<span class="t" style="left:1339.68px;top:175px;font-size:14.0px;color:#fff;transform:scaleX(0.9193);-webkit-text-stroke:0.3px #fff;">PRIVACY POLICY</span>
<span class="t" style="left:1481.30px;top:175px;font-size:14.0px;color:#fff;transform:scaleX(0.9437);-webkit-text-stroke:0.3px #fff;">ABOUT</span>
<span class="t" style="left:1642.10px;top:162px;font-size:13.4px;font-weight:700;color:#fff;transform:scaleX(0.9745);">Oyauzhi</span>
<span class="t" style="left:1659.00px;top:183px;font-size:11.6px;font-style:italic;color:#9ca3af;transform:scaleX(1.0222);">Logout</span>
<span class="t" style="left:542.99px;top:243px;font-size:17.0px;color:#fff;transform:scaleX(0.9064);">Home &gt; Replays</span>
<span class="t" style="left:536.20px;top:310px;font-size:18.6px;font-weight:700;color:#fff;transform:scaleX(1.1038);">MAP DISTRIBUTION:</span>
<span class="t" style="left:536.09px;top:872px;font-size:18.6px;font-weight:700;color:#fff;transform:scaleX(1.1076);">CIV DISTRIBUTION:</span>
<span class="t" style="left:1052.95px;top:356px;font-size:18.6px;font-weight:700;color:#fff;transform:scaleX(1.0463);">GAMES</span>
<span class="t" style="left:1068.85px;top:295px;font-size:14.6px;color:#cbd5e1;transform:scaleX(0.9463);">Look for a replay</span>
<span class="t" style="left:1053.60px;top:404px;font-size:12.0px;font-style:italic;color:#fff;transform:scaleX(0.9870);">Showing</span>
<span class="t" style="left:1103.00px;top:404px;font-size:12.0px;font-weight:700;font-style:italic;color:#fff;transform:scaleX(0.9500);">20</span>
<span class="t" style="left:1120.00px;top:404px;font-size:12.0px;font-style:italic;color:#fff;transform:scaleX(0.9774);">out of</span>
<span class="t" style="left:1153.80px;top:404px;font-size:12.0px;font-weight:700;font-style:italic;color:#fff;transform:scaleX(0.9407);">1443</span>
<span class="t" style="left:1182.20px;top:404px;font-size:12.0px;font-style:italic;color:#fff;transform:scaleX(0.9711);">replays. Use the search bar to see specific replays.</span>

<!-- page scrollbar -->
<div class="abs" style="left:2555px;top:68px;width:3px;height:1254px;border-radius:2px;background:rgba(162,162,165,.83)"></div>
</div></body></html>
